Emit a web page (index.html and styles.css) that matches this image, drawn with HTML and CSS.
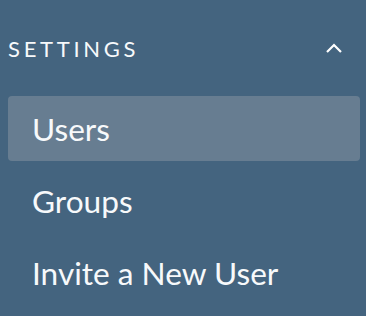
FILE: index.html
```html
<!DOCTYPE html>
<html lang="en">
<head>
    <meta charset="UTF-8">
    <meta name="viewport" content="width=device-width, initial-scale=1.0">
    <title>Settings</title>
    <link rel="stylesheet" href="styles.css">
</head>
<body>
    <nav class="sidebar">
        <div class="section-header">
            <span class="section-title">SETTINGS</span>
            <svg class="chevron" width="18" height="12" viewBox="0 0 18 12">
                <path d="M2 10 L9 3 L16 10" fill="none" stroke="#fff" stroke-width="2.2"/>
            </svg>
        </div>
        <ul class="menu">
            <li class="menu-item active">Users</li>
            <li class="menu-item">Groups</li>
            <li class="menu-item">Invite a New User</li>
        </ul>
    </nav>
</body>
</html>
```

FILE: styles.css
```css
* {
    margin: 0;
    padding: 0;
    box-sizing: border-box;
}

body {
    font-family: 'Lato', sans-serif;
    background: #44647f;
    color: #f7f9fb;
    width: 366px;
    height: 316px;
    overflow: hidden;
}

.sidebar {
    padding: 28px 6px 0 8px;
}

.section-header {
    display: flex;
    justify-content: space-between;
    align-items: center;
    height: 40px;
    padding-right: 17px;
}

.section-title {
    font-size: 22px;
    letter-spacing: 3.7px;
}

.chevron {
    display: block;
}

.menu {
    list-style: none;
    margin-top: 28px;
    display: flex;
    flex-direction: column;
    gap: 7px;
}

.menu-item {
    height: 65px;
    display: flex;
    align-items: center;
    padding-left: 24px;
    font-size: 31.6px;
    border-radius: 4px;
}

.menu-item.active {
    background: #677d91;
}
```
